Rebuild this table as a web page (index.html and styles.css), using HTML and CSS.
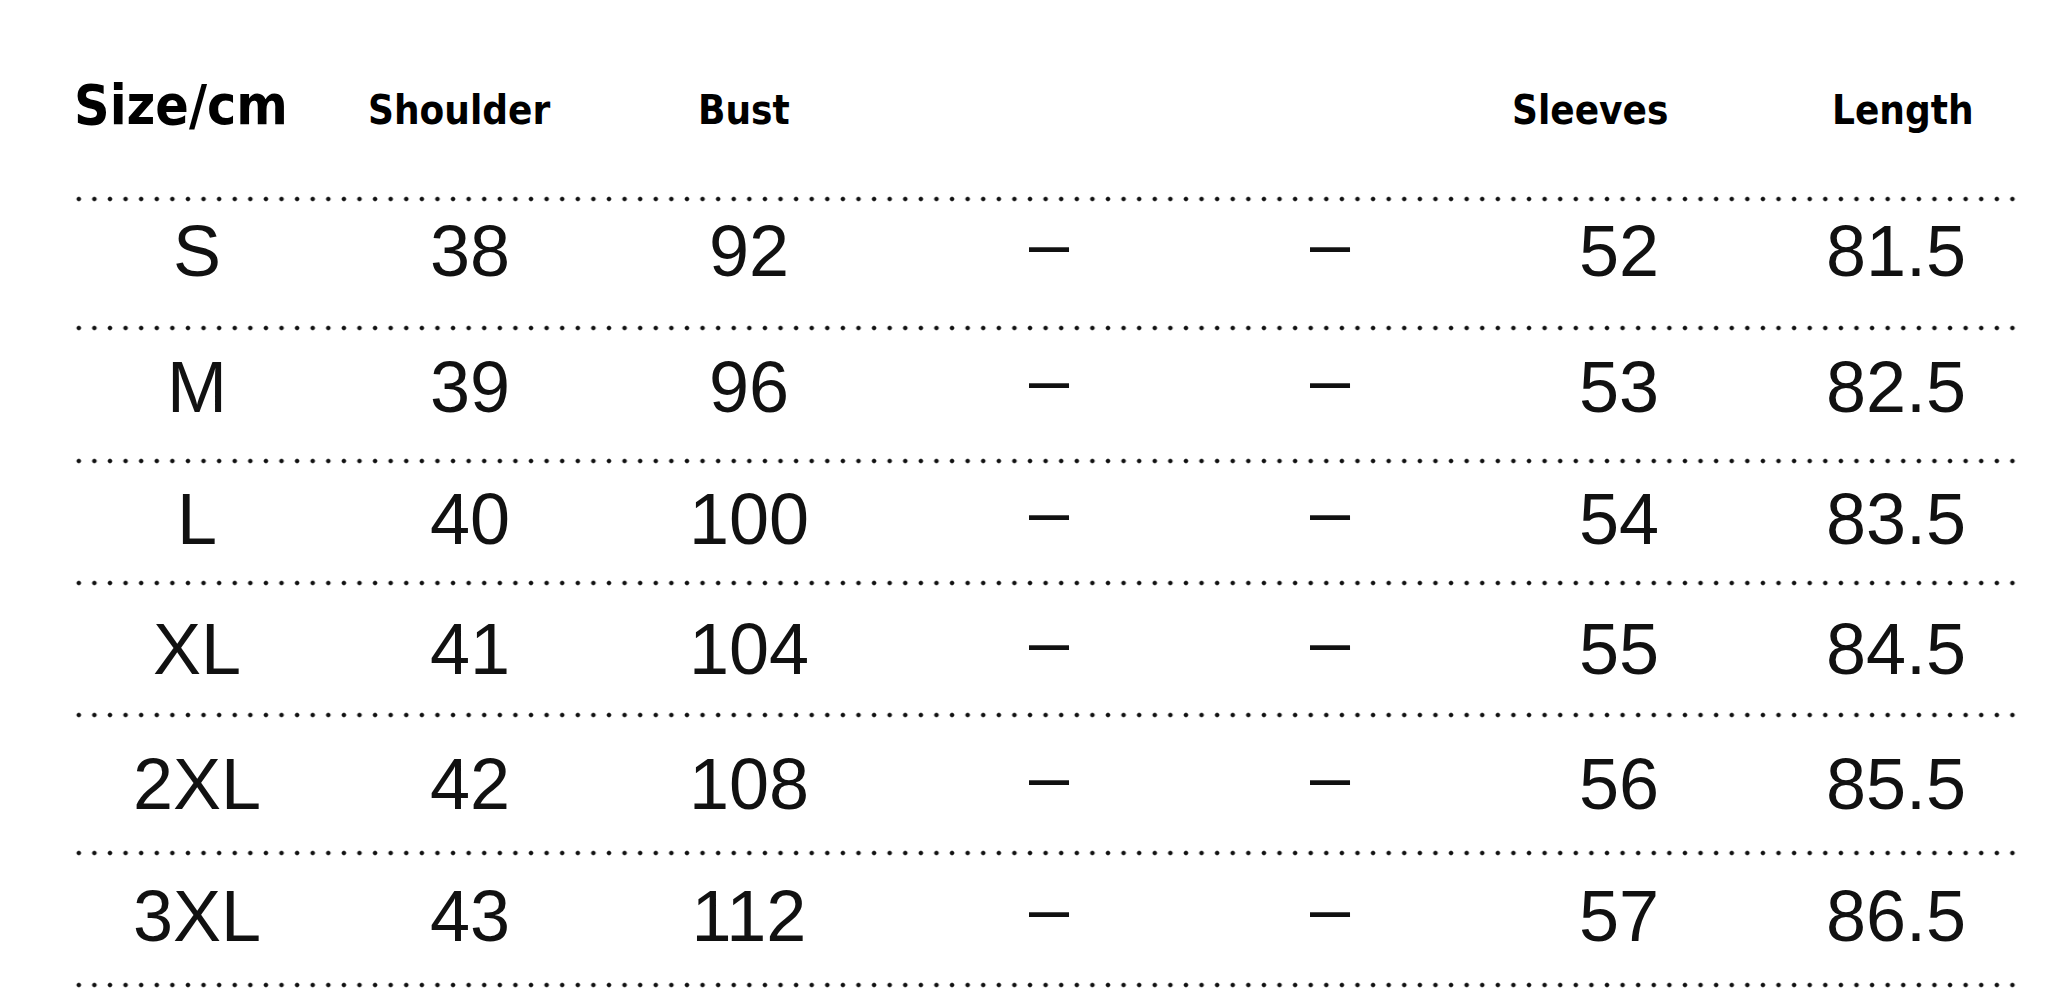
FILE: index.html
```html
<!DOCTYPE html>
<html lang="en">
<head>
<meta charset="utf-8">
<title>Size chart</title>
<link rel="stylesheet" href="styles.css">
</head>
<body>
<div class="chart">
  <div class="head">
    <div class="title">Size/cm</div>
    <div>Shoulder</div>
    <div>Bust</div>
    <div>Sleeves</div>
    <div>Length</div>
  </div>
  <div class="rows">
    <div class="row"><span>S</span><span>38</span><span>92</span><span class="dash">–</span><span class="dash">–</span><span>52</span><span>81.5</span></div>
    <div class="row"><span>M</span><span>39</span><span>96</span><span class="dash">–</span><span class="dash">–</span><span>53</span><span>82.5</span></div>
    <div class="row"><span>L</span><span>40</span><span>100</span><span class="dash">–</span><span class="dash">–</span><span>54</span><span>83.5</span></div>
    <div class="row"><span>XL</span><span>41</span><span>104</span><span class="dash">–</span><span class="dash">–</span><span>55</span><span>84.5</span></div>
    <div class="row"><span>2XL</span><span>42</span><span>108</span><span class="dash">–</span><span class="dash">–</span><span>56</span><span>85.5</span></div>
    <div class="row"><span>3XL</span><span>43</span><span>112</span><span class="dash">–</span><span class="dash">–</span><span>57</span><span>86.5</span></div>
  </div>
</div>
</body>
</html>
```
FILE: styles.css
```css
html, body {
  margin: 0;
  padding: 0;
  background: #ffffff;
}

.chart {
  padding-left: 71px;
  width: 1950px;
}

.head {
  display: grid;
  grid-template-columns: 294px 330px 814px 320px auto;
  align-items: baseline;
  align-content: start;
  height: 196px;
  box-sizing: border-box;
  padding: 75px 0 0 3px;
  font-family: "DejaVu Sans Condensed", "DejaVu Sans", "Noto Sans", sans-serif;
  font-stretch: condensed;
  font-weight: bold;
  font-size: 40px;
  line-height: 60px;
  color: #000;
}

.head .title {
  font-size: 55px;
}

.rows {
  padding-bottom: 6px;
  background: radial-gradient(circle at center, #111 1.5px, rgba(20, 20, 20, 0.6) 2.1px, rgba(20, 20, 20, 0) 2.8px) left bottom / 15.6px 6px repeat-x;
}

.row {
  display: grid;
  grid-template-columns: 252px 294px 264px 336px 226px 352px 202px;
  align-items: center;
  justify-items: center;
  box-sizing: border-box;
  font-family: "Liberation Sans", Arial, sans-serif;
  font-size: 72px;
  line-height: 1;
  color: #111;
  background: radial-gradient(circle at center, #111 1.5px, rgba(20, 20, 20, 0.6) 2.1px, rgba(20, 20, 20, 0) 2.8px) left top / 15.6px 6px repeat-x;
}

.row:nth-child(1) { height: 129px; padding-bottom: 20px; }
.row:nth-child(2) { height: 133px; padding-bottom: 10px; }
.row:nth-child(3) { height: 122px; }
.row:nth-child(4) { height: 132px; padding-top: 6px; }
.row:nth-child(5) { height: 138px; padding-top: 6px; }
.row:nth-child(6) { height: 132px; }

.dash {
  padding-bottom: 16px;
}
```
